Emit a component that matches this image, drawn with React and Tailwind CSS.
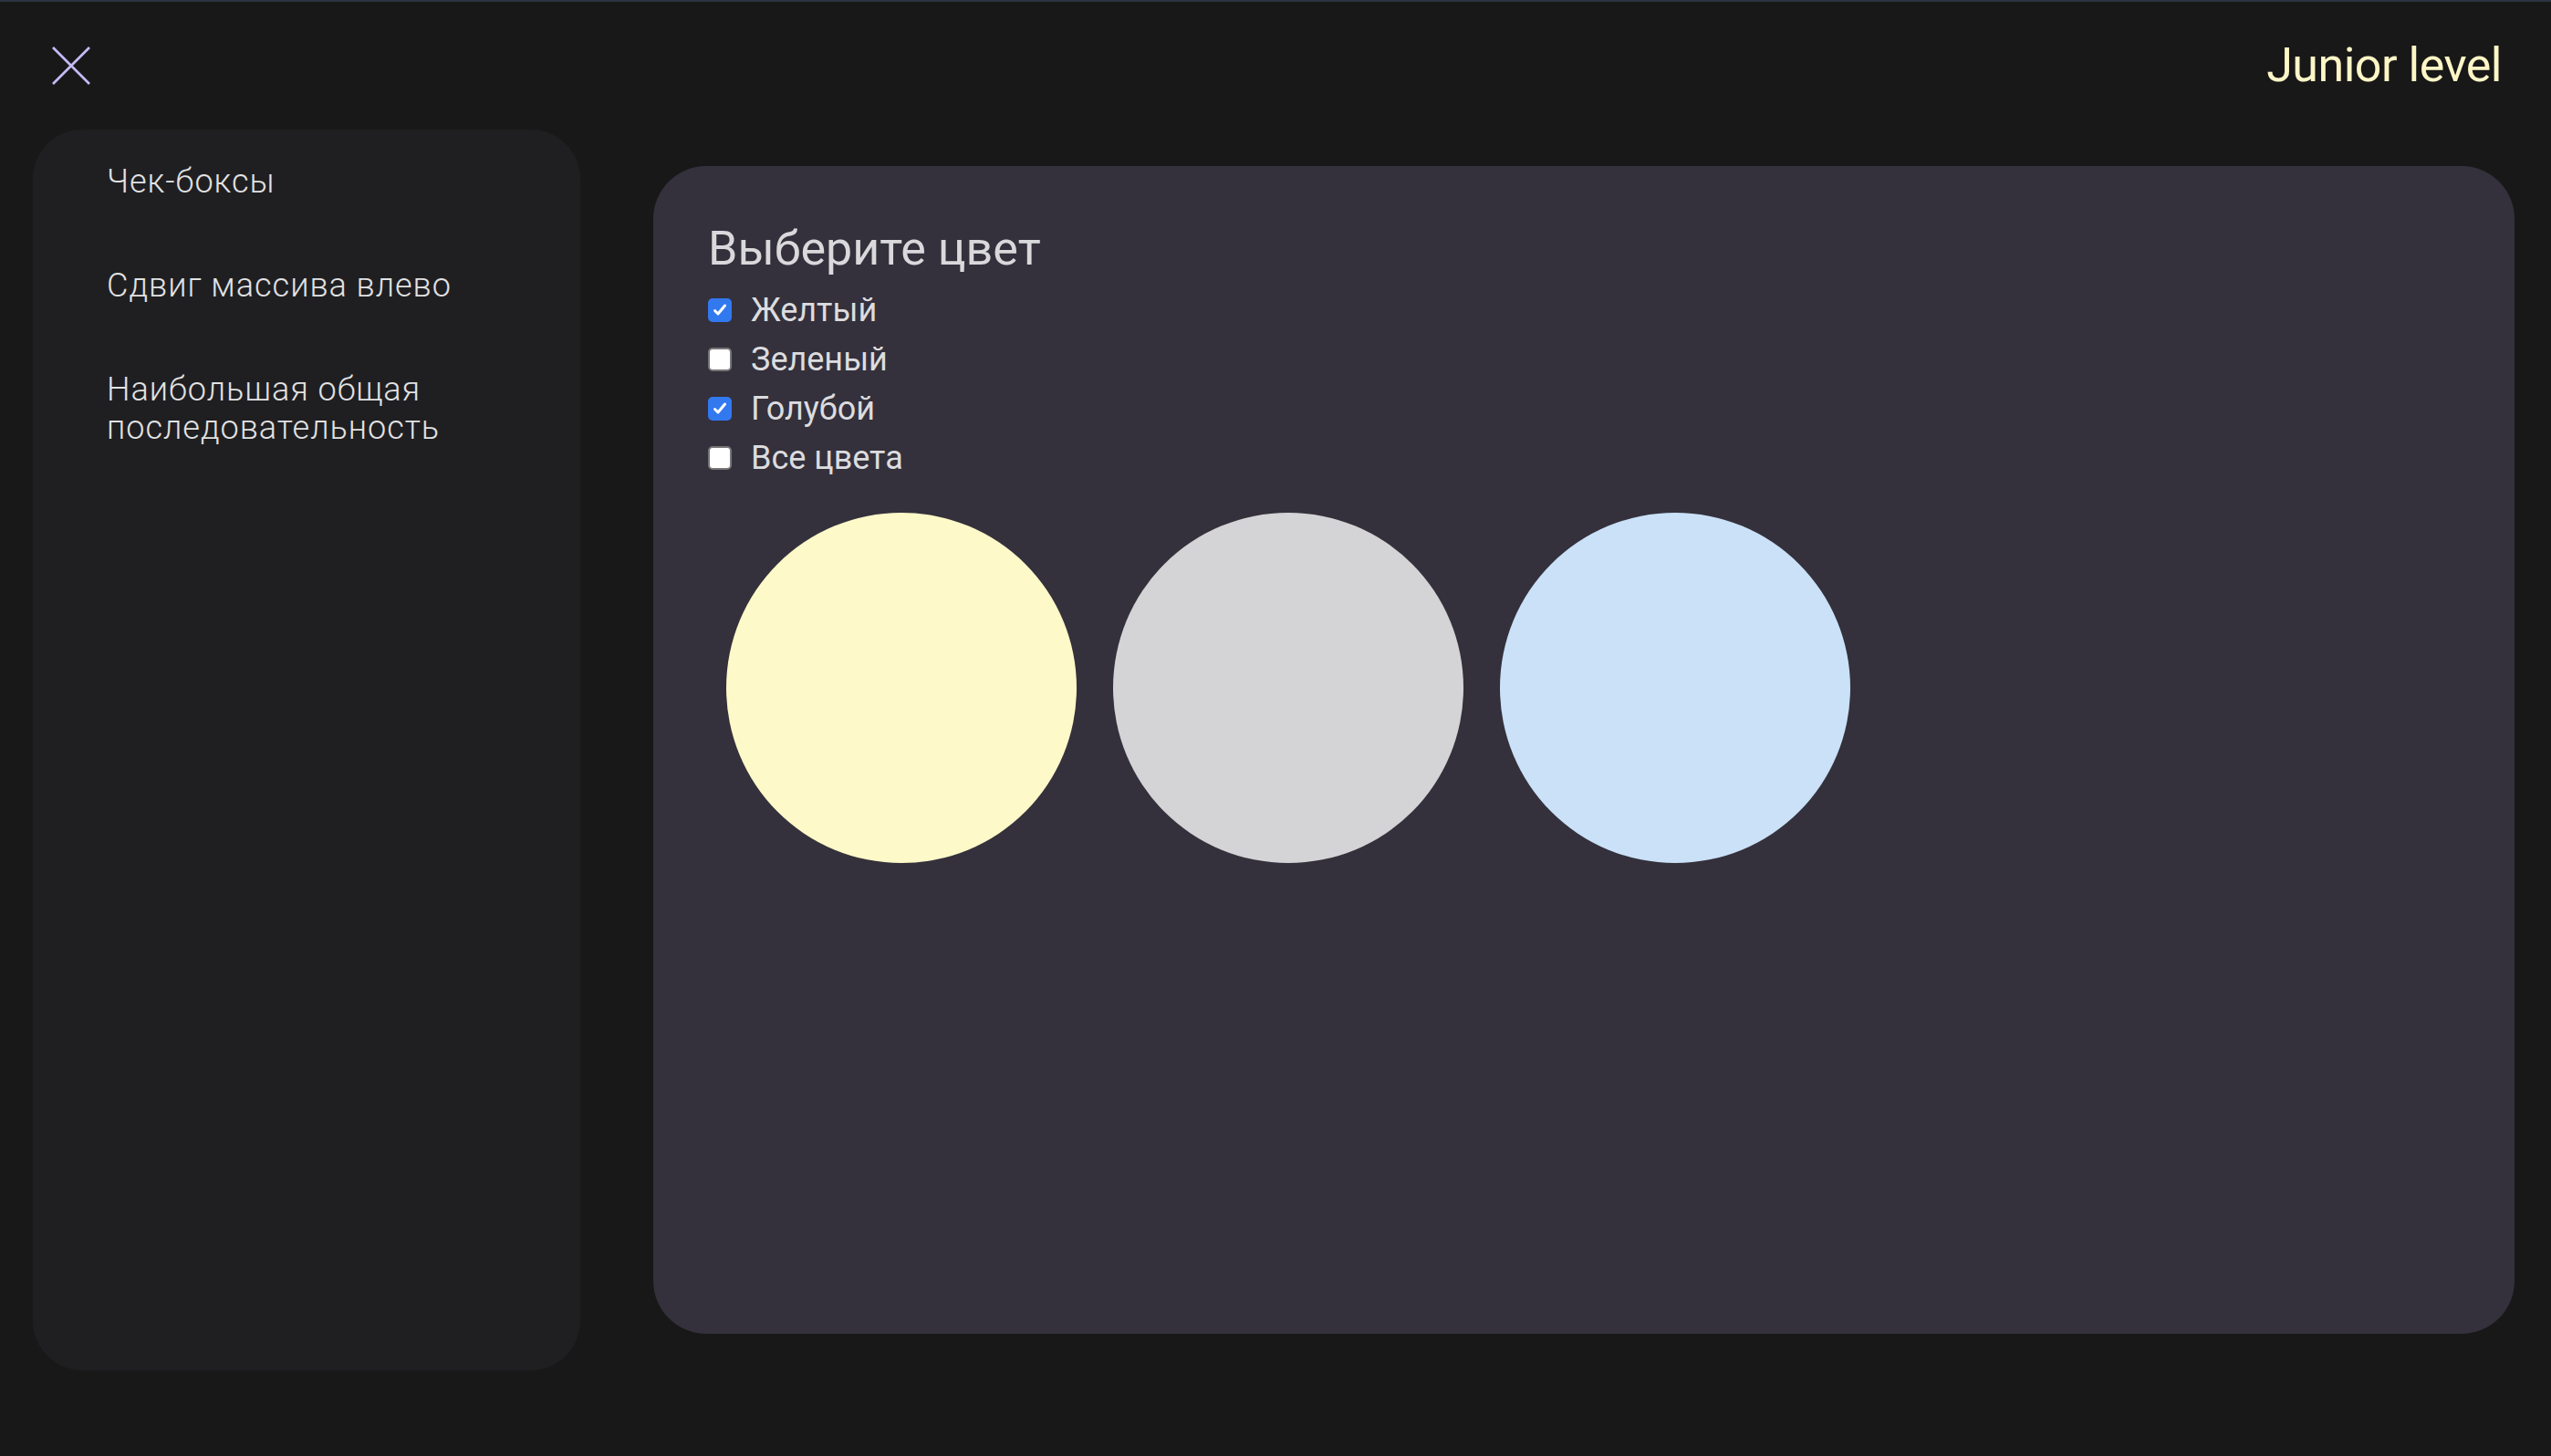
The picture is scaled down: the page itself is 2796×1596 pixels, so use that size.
import {useState} from "react";

const tasks = ["Чек-боксы", "Сдвиг массива влево", "Наибольшая общая последовательность"];

const colors = [
    {name: "Желтый", bg: "bg-[#fdf9c8]"},
    {name: "Зеленый", bg: "bg-[#d4d4d6]"},
    {name: "Голубой", bg: "bg-[#cae1f8]"},
];

function Box({checked}) {
    if (checked) {
        return (
            <span className="flex w-[26px] h-[26px] shrink-0 items-center justify-center rounded-[5px] bg-[#3279f0]">
                <svg width="18" height="18" viewBox="0 0 18 18" fill="none">
                    <path d="M3.5 9.5l3.5 3.5 7.5-9" stroke="white" strokeWidth="3" strokeLinecap="round" strokeLinejoin="round"/>
                </svg>
            </span>
        );
    }
    return <span className="block w-[26px] h-[26px] shrink-0 rounded-[5px] bg-white border-2 border-[#767676]"/>;
}

export default function App() {
    const [checked, setChecked] = useState({"Желтый": true, "Зеленый": false, "Голубой": true});
    const all = colors.every((c) => checked[c.name]);

    const toggle = (name) => setChecked({...checked, [name]: !checked[name]});
    const toggleAll = () => {
        const next = {};
        colors.forEach((c) => (next[c.name] = !all));
        setChecked(next);
    };

    return (
        <div className="min-h-screen w-full bg-[#181818] border-t-2 border-[#2c3340] font-['Roboto',sans-serif] flex flex-col">
            <header className="flex items-start justify-between h-[140px] pl-[57px] pr-[54px] pt-[49px]">
                <svg width="42" height="42" viewBox="0 0 42 42" className="block">
                    <path d="M1 1L41 41M41 1L1 41" stroke="#c6bbf8" strokeWidth="2.7"/>
                </svg>
                <span className="text-[52px] leading-none tracking-[-0.5px] text-[#fdf6c6] -mt-[5px]">Junior level</span>
            </header>

            <div className="flex gap-[80px] pl-[36px] pr-[40px]">
                <aside className="w-[600px] h-[1360px] shrink-0 rounded-[54px] bg-[#1f1f22] pl-[81px] pr-[40px]">
                    {tasks.map((t) => (
                        <div key={t} className="py-[36px] text-[36px] leading-[42px] font-light tracking-[1px] text-[#e2e2e2]">
                            {t}
                        </div>
                    ))}
                </aside>

                <main className="flex-1 h-[1280px] mt-[40px] rounded-[58px] bg-[#34313c] pt-[60px] px-[60px]">
                    <h1 className="text-[52px] leading-[61px] font-normal text-[#d9d9dc] mb-[10px]">Выберите цвет</h1>
                    <div className="flex flex-col">
                        {colors.map((c) => (
                            <label key={c.name} onClick={() => toggle(c.name)} className="flex items-center h-[54px] gap-[21px] cursor-pointer">
                                <Box checked={checked[c.name]}/>
                                <span className="text-[36px] leading-[42px] text-[#dcdcdf]">{c.name}</span>
                            </label>
                        ))}
                        <label onClick={toggleAll} className="flex items-center h-[54px] gap-[21px] cursor-pointer">
                            <Box checked={all}/>
                            <span className="text-[36px] leading-[42px] text-[#dcdcdf]">Все цвета</span>
                        </label>
                    </div>
                    <div className="flex gap-[40px] mt-[33px] pl-[20px]">
                        {colors.map((c) => (
                            <div key={c.name} className={`w-[384px] h-[384px] rounded-full ${checked[c.name] ? c.bg : "bg-[#d4d4d6]"}`}/>
                        ))}
                    </div>
                </main>
            </div>
        </div>
    );
}
